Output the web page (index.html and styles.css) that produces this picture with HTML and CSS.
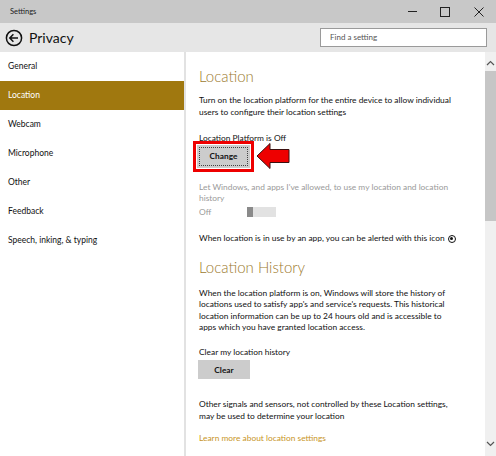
FILE: index.html
```html
<!DOCTYPE html>
<html>
<head>
<meta charset="utf-8">
<link rel="stylesheet" href="styles.css">
</head>
<body>
<div class="window">
  <div class="titlebar">
    <span class="title">Settings</span>
    <div class="controls">
      <span class="ctl ctl-min"></span>
      <span class="ctl ctl-max"></span>
      <svg class="ctl-close" width="10" height="10" viewBox="0 0 10 10"><path d="M0.5 0.5 L9.5 9.5 M9.5 0.5 L0.5 9.5" stroke="#222" stroke-width="1"/></svg>
    </div>
  </div>
  <div class="header">
    <div class="back">
      <svg width="18" height="18" viewBox="0 0 18 18"><circle cx="9" cy="9" r="7.6" fill="none" stroke="#111" stroke-width="1.5"/><path d="M4.8 9 H13 M8.4 5.3 L4.8 9 L8.4 12.7" fill="none" stroke="#111" stroke-width="1.5"/></svg>
      <span class="page-title">Privacy</span>
    </div>
    <div class="search">Find a setting</div>
  </div>
  <div class="main">
    <nav class="sidebar">
      <div class="nav-item">General</div>
      <div class="nav-item selected">Location</div>
      <div class="nav-item">Webcam</div>
      <div class="nav-item">Microphone</div>
      <div class="nav-item">Other</div>
      <div class="nav-item">Feedback</div>
      <div class="nav-item">Speech, inking, &amp; typing</div>
    </nav>
    <section class="content">
      <h2 class="heading">Location</h2>
      <p class="text para1">Turn on the location platform for the entire device to allow individual users to configure their location settings</p>
      <p class="text label1">Location Platform is Off</p>
      <div class="change-row">
        <div class="highlight"><button class="btn btn-focus">Change</button></div>
        <svg class="arrow" width="34" height="28" viewBox="0 0 34 28"><path d="M1 14 L14 1.5 L14 7.5 L33 7.5 L33 20.5 L14 20.5 L14 26.5 Z" fill="#ee0000" stroke="#3a1010" stroke-width="1"/></svg>
      </div>
      <p class="text disabled">Let Windows, and apps I've allowed, to use my location and location history</p>
      <div class="toggle-row">
        <span class="text disabled off">Off</span>
        <span class="toggle"><span class="thumb"></span></span>
      </div>
      <p class="text alert">When location is in use by an app, you can be alerted with this icon <span class="loc-icon"></span></p>
      <h2 class="heading heading2">Location History</h2>
      <p class="text para2">When the location platform is on, Windows will store the history of locations used to satisfy app's and service's requests. This historical location information can be up to 24 hours old and is accessible to apps which you have granted location access.</p>
      <p class="text label2">Clear my location history</p>
      <button class="btn btn-clear">Clear</button>
      <p class="text para3">Other signals and sensors, not controlled by these Location settings, may be used to determine your location</p>
      <p class="text link">Learn more about location settings</p>
    </section>
    <div class="scrollbar">
      <svg class="chev" width="9" height="6" viewBox="0 0 9 6"><path d="M1 5 L4.5 1.5 L8 5" fill="none" stroke="#555" stroke-width="1.2"/></svg>
      <div class="thumb-bar"></div>
      <div class="spacer"></div>
      <svg class="chev" width="9" height="6" viewBox="0 0 9 6"><path d="M1 1 L4.5 4.5 L8 1" fill="none" stroke="#555" stroke-width="1.2"/></svg>
    </div>
  </div>
</div>
</body>
</html>
```
FILE: styles.css
```css
* { box-sizing: border-box; }
html, body { margin: 0; padding: 0; background: #fff; }
body { font-family: "Lato", "Open Sans", sans-serif; color: #111; }
.window { width: 496px; height: 456px; overflow: hidden; display: flex; flex-direction: column; }

.titlebar { height: 23px; background: #c8c8c8; display: flex; align-items: center; justify-content: space-between; padding-left: 10px; }
.title { font-size: 7.5px; color: #222; }
.controls { display: flex; align-items: center; height: 100%; }
.ctl { display: block; }
.ctl-min { width: 9px; height: 1px; background: #222; margin-right: 23px; }
.ctl-max { width: 10px; height: 10px; border: 1px solid #222; margin-right: 24px; }
.ctl-close { margin-right: 12px; }

.header { height: 29px; background: #e6e6e6; display: flex; align-items: center; justify-content: space-between; padding: 0 9px 0 5px; }
.back { display: flex; align-items: center; gap: 6px; }
.back svg { display: block; }
.page-title { font-size: 14px; color: #111; }
.search { width: 167px; height: 19px; background: #fff; border: 1px solid #9a9a9a; font-size: 8px; color: #555; padding-left: 9px; line-height: 17px; }

.main { flex: 1; display: flex; min-height: 0; }
.sidebar { width: 186px; border-right: 2px solid #e2e2e2; background: #fff; }
.nav-item { height: 29px; line-height: 29px; padding-left: 8px; font-size: 8.5px; color: #111; }
.nav-item.selected { background: #a0780f; color: #fff; }

.content { flex: 1; padding: 14px 0 0 13px; }
.heading { margin: 0; font-weight: 300; font-size: 15px; line-height: 20px; color: #9c7a2e; }
.text { margin: 0; font-size: 8.4px; line-height: 11.5px; color: #111; }
.para1 { margin-top: 9px; width: 256px; }
.label1 { margin-top: 15px; }
.change-row { display: flex; align-items: center; gap: 2px; margin-top: -4px; margin-left: -6px; }
.highlight { border: 3px solid #ee0000; padding: 1px; }
.btn { display: block; border: none; background: #cccccc; font-family: inherit; font-weight: 700; font-size: 8.3px; color: #111; padding: 0; }
.btn-focus { width: 53px; height: 23px; outline: 1px dotted #444; outline-offset: -3px; }
.arrow { display: block; }
.disabled { color: #9a9a9a; }
p.disabled { margin-top: 10px; width: 256px; }
.toggle-row { display: flex; align-items: center; margin-top: 2px; }
.off { width: 48px; flex-shrink: 0; }
.toggle { width: 29px; height: 10px; background: #e2e2e2; display: flex; flex-shrink: 0; }
.thumb { display: block; width: 6px; height: 10px; background: #8a8a8a; }
.alert { margin-top: 15px; display: flex; align-items: center; gap: 3px; }
.loc-icon { display: inline-block; width: 8px; height: 8px; border: 1px solid #111; border-radius: 50%; position: relative; }
.loc-icon::after { content: ""; position: absolute; left: 1.5px; top: 1.5px; width: 3px; height: 3px; border-radius: 50%; background: #111; }
.heading2 { margin-top: 12px; }
.para2 { margin-top: 11px; width: 256px; }
.label2 { margin-top: 13px; }
.btn-clear { width: 52px; height: 19px; margin-top: 2px; margin-left: -1px; }
.para3 { margin-top: 20px; width: 256px; }
.link { margin-top: 11px; color: #c8951f; }

.scrollbar { width: 11px; background: #f0f0f0; display: flex; flex-direction: column; align-items: center; }
.chev { display: block; margin: 8px 0 5px; }
.thumb-bar { width: 11px; height: 150px; background: #c6c6c6; }
.spacer { flex: 1; }
.scrollbar .chev:last-child { margin: 0 0 9px; }
```
